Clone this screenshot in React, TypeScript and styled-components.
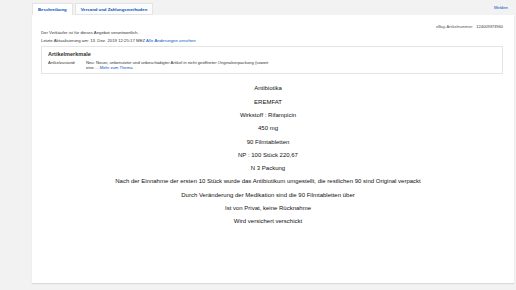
import React from 'react';
import styled, { createGlobalStyle } from 'styled-components';

const GlobalStyle = createGlobalStyle`
  html, body {
    margin: 0;
    padding: 0;
    background: #f2f2f2;
    font-family: 'Liberation Sans', Arial, sans-serif;
    color: #333;
  }
`;

const Page = styled.div`
  width: 516px;
  height: 290px;
  box-sizing: border-box;
  padding: 3px 2px 7px 32px;
  display: flex;
  flex-direction: column;
`;

const TabBar = styled.div`
  display: flex;
  align-items: flex-end;
  height: 12px;
`;

const Tab = styled.div<{ active?: boolean }>`
  height: 12px;
  box-sizing: border-box;
  padding: 0 5px;
  margin-right: 2px;
  display: flex;
  align-items: center;
  background: ${p => (p.active ? '#ffffff' : '#fcfcfc')};
  border: 1px solid #e4e4e4;
  border-bottom: ${p => (p.active ? 'none' : '1px solid #e4e4e4')};
  font-size: 4.3px;
  font-weight: bold;
  color: #0654ba;
`;

const Report = styled.a`
  margin-left: auto;
  margin-right: 6px;
  align-self: flex-start;
  margin-top: 2px;
  font-size: 4.3px;
  color: #0654ba;
  text-decoration: none;
`;

const Panel = styled.div`
  flex: 1;
  background: #ffffff;
  box-shadow: 0 1px 1px rgba(0, 0, 0, 0.1);
  padding: 9px 11px 0 9px;
  display: flex;
  flex-direction: column;
`;

const ItemNumber = styled.div`
  align-self: flex-end;
  font-size: 4px;
  color: #555;
  line-height: 6px;

  span {
    margin-left: 3px;
    color: #333;
  }
`;

const Meta = styled.div`
  font-size: 4.3px;
  color: #333;
  line-height: 8px;
  margin-top: -1px;

  a {
    color: #0654ba;
    text-decoration: none;
  }
`;

const SpecsBox = styled.div`
  margin-top: 1px;
  border: 1px solid #e5e5e5;
  padding: 2px 5px 3px 6px;
`;

const SpecsTitle = styled.div`
  font-size: 5.5px;
  font-weight: bold;
  color: #333;
  line-height: 10px;
`;

const SpecRow = styled.div`
  display: grid;
  grid-template-columns: 38px 1fr;
  font-size: 4.2px;
  line-height: 4.5px;
  color: #333;
  margin-top: 2px;

  a {
    color: #0654ba;
    text-decoration: none;
  }
`;

const Description = styled.div`
  display: flex;
  flex-direction: column;
  align-items: center;
  padding-top: 8.4px;
  padding-right: 8px;
`;

const Line = styled.p`
  margin: 0;
  font-size: 6px;
  line-height: 13.3px;
  color: #111;
  white-space: nowrap;
`;

const lines = [
  'Antibiotika',
  'EREMFAT',
  'Wirkstoff : Rifampicin',
  '450 mg',
  '90 Filmtabletten',
  'NP : 100 Stück 220,67',
  'N 3 Packung',
  'Nach der Einnahme der ersten 10 Stück wurde das Antibiotikum umgestellt, die restlichen 90 sind Original verpackt',
  'Durch Veränderung der Medikation sind die 90 Filmtabletten über',
  'Ist von Privat, keine Rücknahme',
  'Wird versichert verschickt',
];

const App: React.FC = () => {
  return (
    <>
      <GlobalStyle />
      <Page>
        <TabBar>
          <Tab active>Beschreibung</Tab>
          <Tab>Versand und Zahlungsmethoden</Tab>
          <Report href="#">Melden</Report>
        </TabBar>
        <Panel>
          <ItemNumber>
            eBay-Artikelnummer:<span>124009373960</span>
          </ItemNumber>
          <Meta>
            Der Verkäufer ist für dieses Angebot verantwortlich.
            <br />
            Letzte Aktualisierung am: 13. Dez. 2019 12:25:17 MEZ <a href="#">Alle Änderungen ansehen</a>
          </Meta>
          <SpecsBox>
            <SpecsTitle>Artikelmerkmale</SpecsTitle>
            <SpecRow>
              <div>Artikelzustand:</div>
              <div>
                Neu: Neuer, unbenutzter und unbeschädigter Artikel in nicht geöffneter Originalverpackung (soweit
                <br />
                eine ... <a href="#">Mehr zum Thema</a>
              </div>
            </SpecRow>
          </SpecsBox>
          <Description>
            {lines.map((text, i) => (
              <Line key={i}>{text}</Line>
            ))}
          </Description>
        </Panel>
      </Page>
    </>
  );
};

export default App;
